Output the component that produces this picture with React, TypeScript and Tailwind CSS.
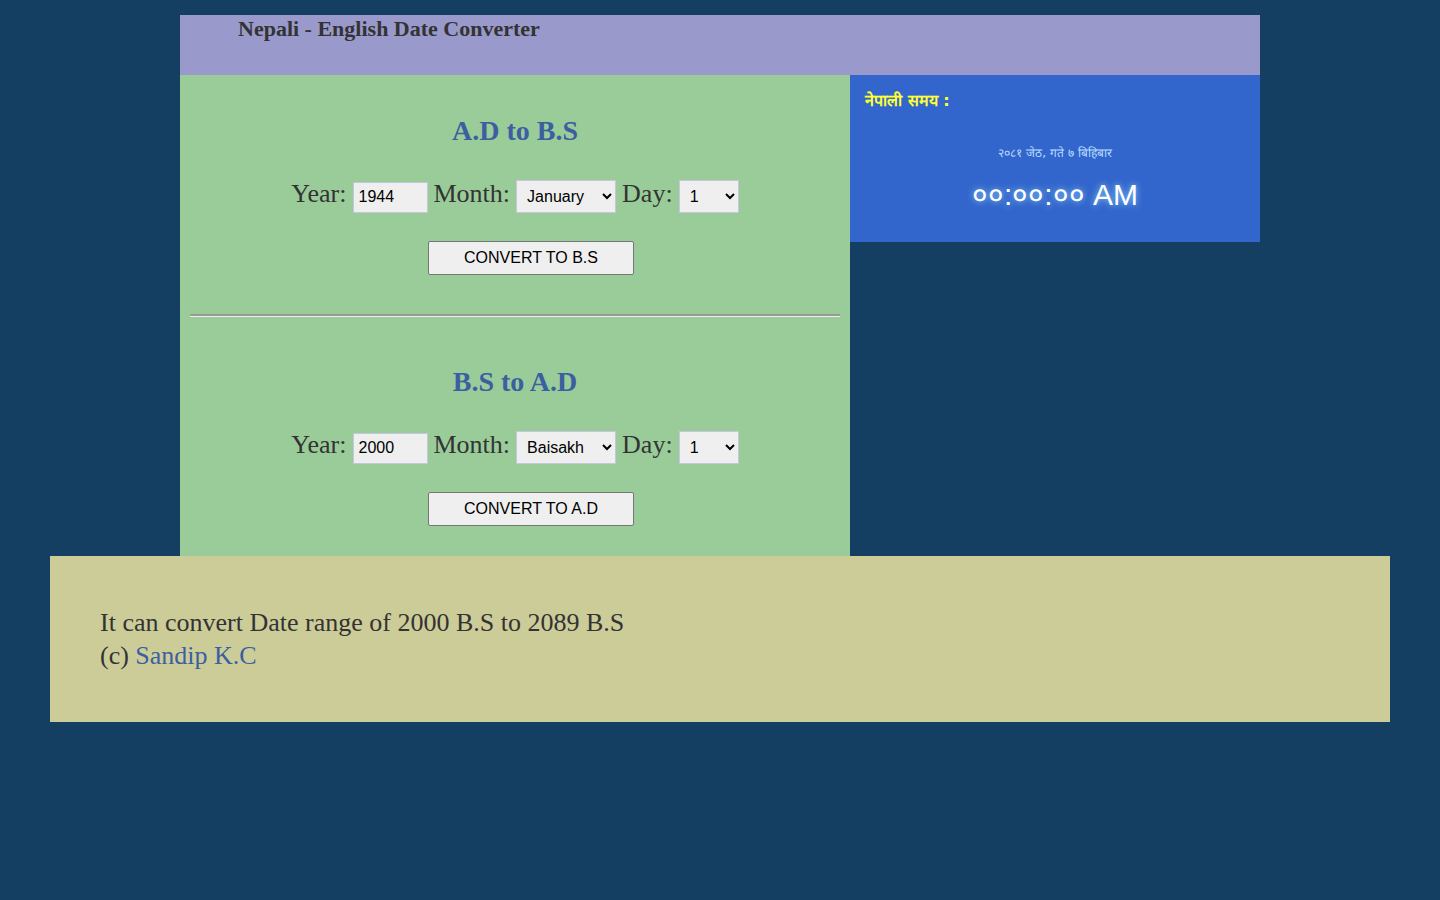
import { useState } from "react";

const adMonths = ["January", "February", "March", "April", "May", "June", "July", "August", "September", "October", "November", "December"];
const bsMonths = ["Baisakh", "Jestha", "Ashadh", "Shrawan", "Bhadra", "Ashwin", "Kartik", "Mangsir", "Poush", "Magh", "Falgun", "Chaitra"];
const days = Array.from({ length: 32 }, (_, i) => String(i + 1));

const inputCls =
  "h-[31px] w-[75px] border border-[#c4c7dd] bg-[#efefef] px-[5px] text-[16px] text-black font-['Liberation_Sans',Arial,sans-serif] outline-none";
const selectCls =
  "h-[33px] border border-[#c4c7dd] bg-[#efefef] px-[6px] text-[16px] text-black font-['Liberation_Sans',Arial,sans-serif]";

const ConverterBlock = ({
  title,
  year,
  months,
  button,
}: {
  title: string;
  year: string;
  months: string[];
  button: string;
}) => {
  const [y, setY] = useState(year);
  return (
    <div className="text-center">
      <h2 className="text-[28px] font-bold leading-[32px] text-[#3b5fa0]">{title}</h2>
      <div className="mt-[32px] flex items-baseline justify-center gap-[6px] text-[26px] leading-[30px] text-[#333]">
        <span>Year:</span>
        <input className={inputCls} value={y} onChange={(e) => setY(e.target.value)} />
        <span>Month:</span>
        <select className={`${selectCls} w-[100px]`} defaultValue={months[0]}>
          {months.map((m) => (
            <option key={m}>{m}</option>
          ))}
        </select>
        <span>Day:</span>
        <select className={`${selectCls} w-[60px]`} defaultValue="1">
          {days.map((d) => (
            <option key={d}>{d}</option>
          ))}
        </select>
      </div>
      <div className="mt-[28px] flex justify-center pl-[32px]">
        <button className="h-[34px] w-[206px] rounded-[2px] border border-[#767676] bg-[#efefef] text-[16px] text-black font-['Liberation_Sans',Arial,sans-serif]">
          {button}
        </button>
      </div>
    </div>
  );
};

export default function App() {
  return (
    <div className="min-h-[900px] bg-[#143f63] pt-[15px] font-['Liberation_Serif','Times_New_Roman',serif]">
      <div className="mx-auto w-[1080px]">
        <header className="h-[60px] bg-[#9999cc] pl-[58px]">
          <h1 className="pt-[1px] text-[22px] font-bold leading-[26px] text-[#333]">Nepali - English Date Converter</h1>
        </header>
        <div className="flex items-start">
          <main className="w-[670px] bg-[#99cc99] px-[10px] pt-[40px] pb-[30px]">
            <ConverterBlock title="A.D to B.S" year="1944" months={adMonths} button="CONVERT TO B.S" />
            <hr className="mt-[39px] border-t-2 border-t-[#9a9a9a] border-b border-b-[#eeeeee]" style={{ borderStyle: "solid" }} />
            <div className="mt-[49px]">
              <ConverterBlock title="B.S to A.D" year="2000" months={bsMonths} button="CONVERT TO A.D" />
            </div>
          </main>
          <aside className="h-[167px] w-[410px] bg-[#3366cc] px-[15px] pt-[15px] font-['DejaVu_Sans',sans-serif]">
            <p className="text-[16px] font-bold leading-[22px] text-[#ffff33]">नेपाली समय :</p>
            <p className="mt-[33px] text-center text-[12px] leading-[16px] text-[#b8dcff]">२०८१ जेठ, गते ७ बिहिबार</p>
            <p className="mt-[17px] text-center text-[30px] leading-[34px] text-white font-['Liberation_Sans',Arial,sans-serif] [text-shadow:0_0_6px_#8fd0ff]">
              ००:००:०० AM
            </p>
          </aside>
        </div>
      </div>
      <footer className="mx-[50px] bg-[#cccc99] px-[50px] py-[50px] text-[26px] leading-[33px] text-[#333]">
        <p>It can convert Date range of 2000 B.S to 2089 B.S</p>
        <p>
          (c) <a href="#" className="text-[#3b5fa0]">Sandip K.C</a>
        </p>
      </footer>
    </div>
  );
}
